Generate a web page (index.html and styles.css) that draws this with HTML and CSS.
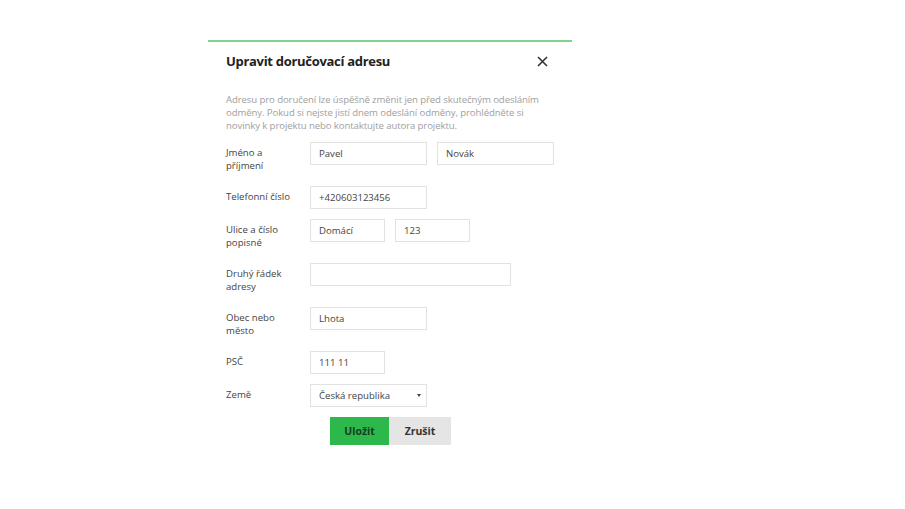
FILE: index.html
```html
<!DOCTYPE html>
<html lang="cs">
<head>
    <meta charset="UTF-8">
    <meta name="viewport" content="width=device-width, initial-scale=1.0">
    <title>Upravit doručovací adresu</title>
    <link rel="stylesheet" href="styles.css">
</head>
<body>
    <div class="modal">
        <div class="modal-header">
            <h2>Upravit doručovací adresu</h2>
            <button type="button" class="close" aria-label="Zavřít">
                <svg width="11" height="11" viewBox="0 0 11 11"><path d="M1 1L10 10M10 1L1 10" stroke="#333" stroke-width="1.6" fill="none"/></svg>
            </button>
        </div>
        <p class="note">Adresu pro doručení lze úspěšně změnit jen před skutečným odesláním odměny. Pokud si nejste jistí dnem odeslání odměny, prohlédněte si novinky k projektu nebo kontaktujte autora projektu.</p>
        <form class="address-form">
            <div class="row">
                <label>Jméno a příjmení</label>
                <div class="fields">
                    <input class="w-m" type="text" value="Pavel">
                    <input class="w-m" type="text" value="Novák">
                </div>
            </div>
            <div class="row">
                <label>Telefonní číslo</label>
                <div class="fields">
                    <input class="w-m" type="text" value="+420603123456">
                </div>
            </div>
            <div class="row">
                <label>Ulice a číslo popisné</label>
                <div class="fields">
                    <input class="w-s" type="text" value="Domácí">
                    <input class="w-s" type="text" value="123">
                </div>
            </div>
            <div class="row">
                <label>Druhý řádek adresy</label>
                <div class="fields">
                    <input class="w-l" type="text" value="">
                </div>
            </div>
            <div class="row">
                <label>Obec nebo město</label>
                <div class="fields">
                    <input class="w-m" type="text" value="Lhota">
                </div>
            </div>
            <div class="row">
                <label>PSČ</label>
                <div class="fields">
                    <input class="w-s" type="text" value="111 11">
                </div>
            </div>
            <div class="row">
                <label>Země</label>
                <div class="fields">
                    <div class="select w-m">
                        <span>Česká republika</span>
                        <i class="caret"></i>
                    </div>
                </div>
            </div>
            <div class="actions">
                <button type="submit" class="btn btn-save">Uložit</button>
                <button type="button" class="btn btn-cancel">Zrušit</button>
            </div>
        </form>
    </div>
</body>
</html>
```

FILE: styles.css
```css
body {
    margin: 0;
    background-color: #fff;
    font-family: "Open Sans", "Noto Sans", Arial, sans-serif;
    color: #333;
}
.modal {
    width: 364px;
    margin: 40px 0 0 208px;
    border-top: 2px solid #7ed38d;
    padding: 0 18px;
    box-sizing: border-box;
}
.modal-header {
    display: flex;
    justify-content: space-between;
    align-items: center;
    margin-top: 10px;
}
.modal-header h2 {
    margin: 0;
    font-size: 13px;
    font-weight: 700;
    letter-spacing: -0.3px;
    color: #222;
}
.close {
    background: none;
    border: none;
    padding: 0;
    margin-right: 6px;
    cursor: pointer;
    display: flex;
}
.note {
    margin: 23px 0 10px;
    font-size: 9.6px;
    line-height: 13px;
    letter-spacing: -0.1px;
    color: #a0a0a0;
}
.row {
    display: flex;
    margin-bottom: 10px;
}
.row label {
    width: 66px;
    margin-right: 18px;
    flex-shrink: 0;
    padding: 4px 0;
    font-size: 9.6px;
    line-height: 13px;
    color: #444;
    min-height: 26px;
}
.row:nth-child(2) label,
.row:nth-child(6) label,
.row:nth-child(7) label {
    min-height: 0;
}
.fields {
    display: flex;
    gap: 10px;
    align-items: flex-start;
}
input, .select {
    height: 23px;
    box-sizing: border-box;
    border: 1px solid #e2e2e2;
    padding: 0 8px;
    font-family: inherit;
    font-size: 9.6px;
    color: #444;
    background: #fff;
}
.w-s { width: 75px; }
.w-m { width: 117px; }
.w-l { width: 201px; }
.select {
    display: flex;
    align-items: center;
    justify-content: space-between;
    padding-right: 5px;
}
.caret {
    width: 0;
    height: 0;
    border-left: 2px solid transparent;
    border-right: 2px solid transparent;
    border-top: 3px solid #444;
}
.actions {
    display: flex;
    padding-left: 104px;
}
.btn {
    height: 28px;
    border: none;
    font-family: inherit;
    font-size: 10.5px;
    font-weight: 700;
    cursor: pointer;
}
.btn-save {
    width: 59px;
    background-color: #2db84b;
    color: #173d1f;
}
.btn-cancel {
    width: 62px;
    background-color: #e5e5e5;
    color: #333;
}
```
